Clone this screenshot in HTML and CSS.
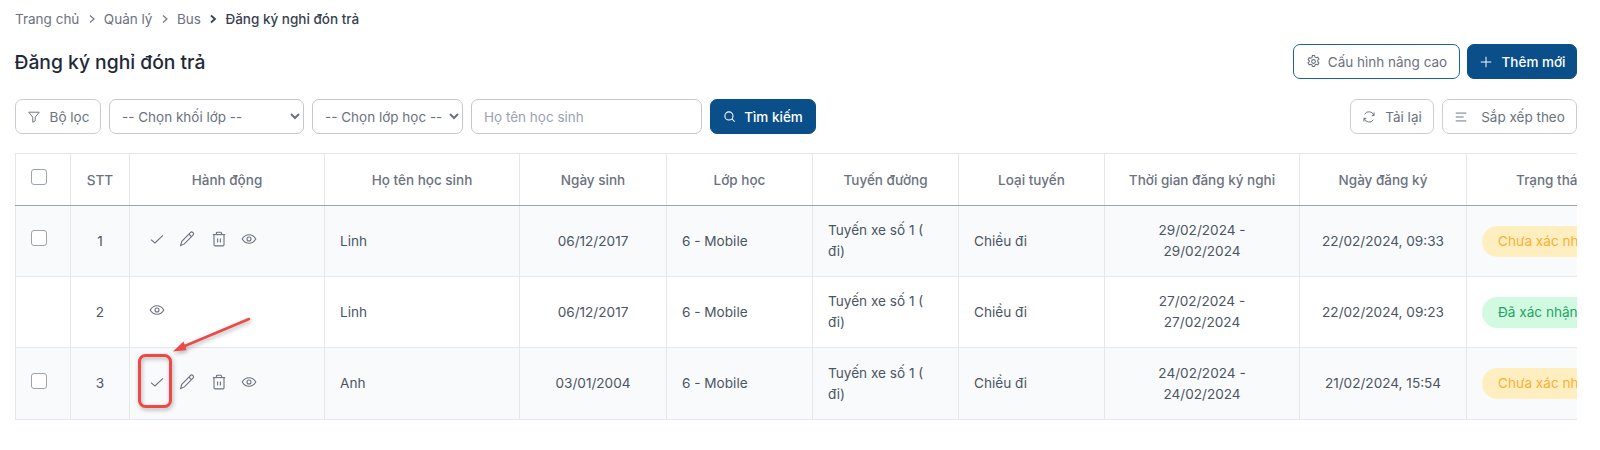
FILE: index.html
```html
<!DOCTYPE html>
<html lang="vi">
<head>
<meta charset="utf-8">
<title>Đăng ký nghỉ đón trả</title>
<link rel="stylesheet" href="styles.css">
</head>
<body>
<svg class="defs" width="0" height="0" aria-hidden="true">
  <symbol id="i-check" viewBox="0 0 16 16"><path d="M2 8.600 5.900 12 14 4.400"/></symbol>
  <symbol id="i-pencil" viewBox="0 0 16 16"><path d="M11.400 1.600a1.700 1.700 0 0 1 2.600 2.500L5.400 12.900 1.600 14.600l1.200-4.200z"/><path d="M10 3.200l2.600 2.600"/></symbol>
  <symbol id="i-trash" viewBox="0 0 16 16"><path d="M1.800 3.600h12.400"/><path d="M5.400 3.400V2.200c0-.6.400-1 1-1h3.200c.6 0 1 .4 1 1v1.200"/><path d="M3 3.800v10c0 .7.400 1.100 1.100 1.100h7.800c.7 0 1.100-.4 1.100-1.100v-10"/><path d="M6.600 7.400v4M9.400 7.400v4"/></symbol>
  <symbol id="i-eye" viewBox="0 0 16 16"><path d="M1.200 8C2.800 5.200 5.200 3.700 8 3.700s5.200 1.500 6.800 4.300c-1.600 2.800-4 4.300-6.800 4.300S2.800 10.800 1.200 8z"/><circle cx="8" cy="8" r="2"/></symbol>
</svg>

<div class="page">
  <nav class="crumbs">
    <span>Trang chủ</span>
    <svg class="chev" viewBox="0 0 10 10"><path d="M3 1.500 7 5 3 8.500"/></svg>
    <span>Quản lý</span>
    <svg class="chev" viewBox="0 0 10 10"><path d="M3 1.500 7 5 3 8.500"/></svg>
    <span>Bus</span>
    <svg class="chev strong" viewBox="0 0 10 10"><path d="M3 1.500 7 5 3 8.500"/></svg>
    <span class="current">Đăng ký nghỉ đón trả</span>
  </nav>

  <header class="head">
    <h1>Đăng ký nghỉ đón trả</h1>
    <div class="actions">
      <button class="btn outline">
        <svg class="ic gear" viewBox="0 0 16 16"><circle cx="8" cy="8" r="2"/><path d="M6.800 1.500h2.400l.4 1.800 1.300.7 1.700-.6 1.200 2.100-1.300 1.200v1.500l1.300 1.200-1.200 2.100-1.700-.6-1.300.7-.4 1.800H6.800l-.4-1.800-1.300-.7-1.700.6-1.200-2.100 1.300-1.200V7.200L2.200 6l1.200-2.100 1.700.6 1.300-.7z"/></svg>
        Cấu hình nâng cao
      </button>
      <button class="btn primary wide">
        <svg class="ic" viewBox="0 0 16 16"><path d="M8 2v12M2 8h12"/></svg>
        Thêm mới
      </button>
    </div>
  </header>

  <div class="filters">
    <div class="filter-left">
      <button class="btn ghost filter-btn">
        <svg class="ic" viewBox="0 0 16 16"><path d="M2 2.500h12L9.400 8.200v4.300l-2.800 1.500V8.200z"/></svg>
        Bộ lọc
      </button>
      <select class="field sel-grade"><option>-- Chọn khối lớp --</option></select>
      <select class="field sel-class"><option>-- Chọn lớp học --</option></select>
      <input class="field name" type="text" placeholder="Họ tên học sinh">
      <button class="btn primary search">
        <svg class="ic small" viewBox="0 0 16 16"><circle cx="7.300" cy="7.300" r="5"/><path d="M11 11l3.300 3.300"/></svg>
        Tìm kiếm
      </button>
    </div>
    <div class="filter-right">
      <button class="btn ghost reload">
        <svg class="ic" viewBox="0 0 16 16"><path d="M13.600 6.400A5.800 5.800 0 0 0 3 4.800"/><path d="M2.400 8.900A5.800 5.800 0 0 0 13 11.200"/><path d="M13.800 2.800v3.600h-2.600"/><path d="M2.200 13.200V9.600h2.600"/></svg>
        Tải lại
      </button>
      <button class="btn ghost sort">
        <svg class="ic" viewBox="0 0 16 16"><path d="M2 3.500h12M2 8h9M2 12.500h12"/></svg>
        Sắp xếp theo
      </button>
    </div>
  </div>

  <div class="table-wrap">
    <table>
      <colgroup>
        <col class="c-check"><col class="c-stt"><col class="c-act"><col class="c-name"><col class="c-dob">
        <col class="c-class"><col class="c-route"><col class="c-type"><col class="c-time"><col class="c-reg"><col class="c-status">
      </colgroup>
      <thead>
        <tr>
          <th><span class="box"></span></th>
          <th>STT</th>
          <th>Hành động</th>
          <th>Họ tên học sinh</th>
          <th>Ngày sinh</th>
          <th>Lớp học</th>
          <th>Tuyến đường</th>
          <th>Loại tuyến</th>
          <th>Thời gian đăng ký nghỉ</th>
          <th>Ngày đăng ký</th>
          <th>Trạng thái</th>
        </tr>
      </thead>
      <tbody>
        <tr>
          <td><span class="box"></span></td>
          <td class="mid">1</td>
          <td><div class="row-icons">
            <svg class="act"><use href="#i-check"/></svg><svg class="act"><use href="#i-pencil"/></svg><svg class="act trash"><use href="#i-trash"/></svg><svg class="act"><use href="#i-eye"/></svg>
          </div></td>
          <td>Linh</td>
          <td class="mid">06/12/2017</td>
          <td>6 - Mobile</td>
          <td>Tuyến xe số 1 ( đi)</td>
          <td>Chiều đi</td>
          <td class="mid">29/02/2024 - 29/02/2024</td>
          <td class="mid">22/02/2024, 09:33</td>
          <td><span class="badge wait">Chưa xác nhận</span></td>
        </tr>
        <tr>
          <td></td>
          <td class="mid">2</td>
          <td><div class="row-icons">
            <svg class="act"><use href="#i-eye"/></svg>
          </div></td>
          <td>Linh</td>
          <td class="mid">06/12/2017</td>
          <td>6 - Mobile</td>
          <td>Tuyến xe số 1 ( đi)</td>
          <td>Chiều đi</td>
          <td class="mid">27/02/2024 - 27/02/2024</td>
          <td class="mid">22/02/2024, 09:23</td>
          <td><span class="badge ok">Đã xác nhận</span></td>
        </tr>
        <tr>
          <td><span class="box"></span></td>
          <td class="mid">3</td>
          <td><div class="row-icons">
            <svg class="act"><use href="#i-check"/></svg><svg class="act"><use href="#i-pencil"/></svg><svg class="act trash"><use href="#i-trash"/></svg><svg class="act"><use href="#i-eye"/></svg>
          </div></td>
          <td>Anh</td>
          <td class="mid">03/01/2004</td>
          <td>6 - Mobile</td>
          <td>Tuyến xe số 1 ( đi)</td>
          <td>Chiều đi</td>
          <td class="mid">24/02/2024 - 24/02/2024</td>
          <td class="mid">21/02/2024, 15:54</td>
          <td><span class="badge wait">Chưa xác nhận</span></td>
        </tr>
      </tbody>
    </table>
  </div>
</div>

<svg class="annotation" width="1600" height="450" viewBox="0 0 1600 450" aria-hidden="true">
  <rect x="139.500" y="355.500" width="31" height="51" rx="6"/>
  <path class="shaft" d="M249 319 180 348"/>
  <path class="head-tip" d="M173 351.500 183.500 341.500 186.500 350z"/>
</svg>
</body>
</html>
```

FILE: styles.css
```css
* { box-sizing: border-box; }
html, body { margin: 0; padding: 0; background: #fff; }
body {
  width: 1600px;
  height: 450px;
  overflow: hidden;
  position: relative;
  font-family: Inter, "Noto Sans", sans-serif;
  font-size: 13.600px;
  color: #4b5563;
}
.defs { position: absolute; }
.page { width: 1577px; padding: 8px 0 0 15px; }

.crumbs { display: flex; align-items: center; height: 21px; font-size: 13.500px; color: #6b7280; }
.chev { width: 10px; height: 10px; margin: 0 7px 0 7.500px; fill: none; stroke: #6b7280; stroke-width: 1.100; }
.chev.strong { stroke: #374151; stroke-width: 1.800; }
.crumbs .current { color: #374151; font-weight: 500; }

.head { display: flex; justify-content: space-between; align-items: center; margin-top: 15px; height: 35px; }
h1 { margin: 2px 0 0 -0.500px; font-size: 19.300px; font-weight: 500; color: #1f2937; line-height: 35px; }
.actions { display: flex; gap: 7px; }
.filter-left, .filter-right { display: flex; gap: 8px; }

.btn {
  height: 35px;
  display: inline-flex;
  align-items: center;
  justify-content: center;
  gap: 9px;
  padding: 0 8px;
  border-radius: 7px;
  font-family: inherit;
  font-size: 13.500px;
  cursor: pointer;
  background: #fff;
  white-space: nowrap;
}
.btn.outline { width: 167px; gap: 7px; border: 1px solid #1d649f; color: #6b7280; }
.btn.primary { background: #0b4f8a; border: 1px solid #0b4f8a; color: #fff; font-weight: 500; }
.btn.wide { width: 110px; }
.btn.ghost { border: 1px solid #c9cdd2; color: #6b7280; }
.filter-btn { width: 86px; }
.btn.reload { width: 84px; }
.btn.sort { width: 135px; gap: 13px; }
.btn.search { width: 106px; gap: 8px; }

.ic { width: 14px; height: 14px; fill: none; stroke: currentColor; stroke-width: 1.100; flex: none; }
.ic.gear { width: 15px; height: 15px; }
.ic.small { width: 13px; height: 13px; stroke-width: 1.300; }
.outline .ic, .ghost .ic { stroke: #6b7280; }

.filters { display: flex; justify-content: space-between; margin-top: 20px; height: 35px; }
.field {
  flex: none;
  height: 35px;
  border: 1px solid #c4c7cc;
  border-radius: 7px;
  background-color: #fff;
  font-family: inherit;
  font-size: 13.500px;
  color: #6b7280;
  padding: 0 0 0 8px;
}
.sel-grade { width: 195px; }
.sel-class { width: 151px; }
.name { width: 231px; padding: 0 12px; outline: none; }
.name::placeholder { color: #9ca3af; opacity: 1; }

.table-wrap { width: 1562px; margin-top: 19px; overflow: hidden; }
table { table-layout: fixed; border-collapse: collapse; width: 1615px; }
.c-check { width: 55px; } .c-stt { width: 59px; } .c-act { width: 195px; } .c-name { width: 195px; }
.c-dob { width: 147px; } .c-class { width: 146px; } .c-route { width: 146px; } .c-type { width: 146px; }
.c-time { width: 195px; } .c-reg { width: 167px; } .c-status { width: 164px; }

th, td { border: 1px solid #e5e7eb; padding: 0 15px; }
thead tr { height: 52px; }
th { font-weight: 500; font-size: 13.500px; color: #6b7280; text-align: center; border-bottom: 1px solid #9ca3af; }
th:first-child { text-align: left; }
tbody tr { height: 71px; }
tbody tr:last-child { height: 72px; }
tbody tr:nth-child(odd) td { background: #f9fafb; }
td { text-align: left; line-height: 21px; color: #4b5563; }
td.mid { text-align: center; }

.box { display: inline-block; width: 16px; height: 16px; margin-bottom: 6px; border: 1px solid #9ca3af; border-radius: 3px; background: #fff; vertical-align: middle; }
.row-icons { display: flex; align-items: center; gap: 14px; margin: -4px 0 0 4px; }
.act { width: 16px; height: 16px; fill: none; stroke: #6b7280; stroke-width: 1.100; flex: none; }
.act.trash { margin-left: 2px; }

.badge { display: inline-block; height: 31px; line-height: 31px; padding: 0 16px; border-radius: 16px; white-space: nowrap; font-weight: 400; }
.badge.wait { background: #feeec0; color: #fbb034; }
.badge.ok { background: #d1fae0; color: #22a565; }

.annotation { position: absolute; left: 0; top: 0; pointer-events: none; filter: drop-shadow(1px 2px 2px rgba(0,0,0,.3)); }
.annotation rect { fill: none; stroke: #f04747; stroke-width: 3; }
.annotation .shaft { fill: none; stroke: #f04747; stroke-width: 2.500; stroke-linecap: round; }
.annotation .head-tip { fill: #f04747; }
```
